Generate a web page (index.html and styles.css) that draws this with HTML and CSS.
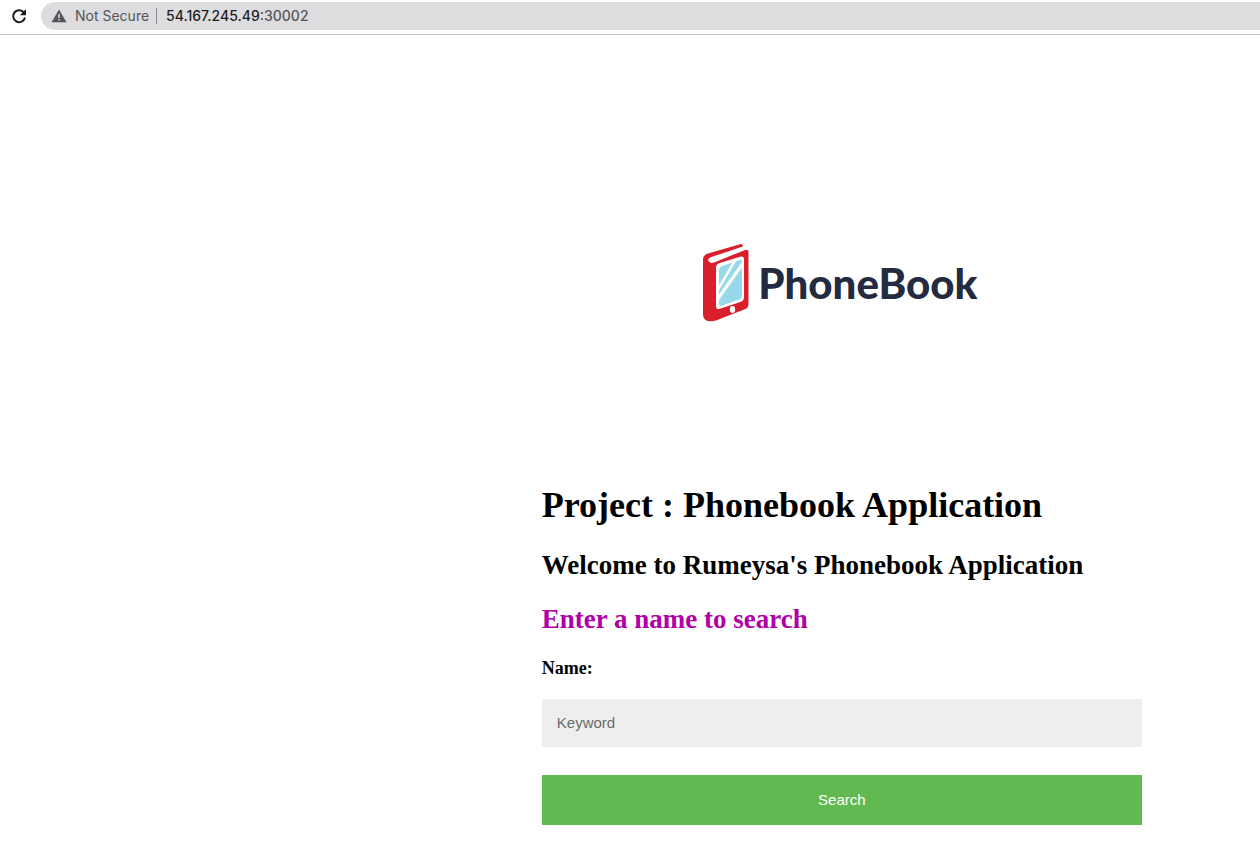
FILE: index.html
```html
<!DOCTYPE html>
<html lang="en">
<head>
<meta charset="utf-8">
<meta name="viewport" content="width=device-width, initial-scale=1">
<title>Phonebook Application</title>
<link rel="stylesheet" href="styles.css">
</head>
<body>
<header class="toolbar">
  <button class="reload" type="button" aria-label="Reload">
    <svg width="16" height="16" viewBox="0 0 16 16" fill="none" stroke="#1d1d1f" stroke-width="2">
      <path d="M13 4.600A6 6 0 1 0 14 9.500"/>
      <path d="M15 1v6.200H8.800z" fill="#1d1d1f" stroke="none"/>
    </svg>
  </button>
  <div class="address">
    <svg class="warning" width="16" height="14" viewBox="0 0 16 14">
      <path d="M8 0.500 15.500 13.300H0.500z" fill="#55565a"/>
      <path d="M7.300 5h1.500v4H7.300zM7.300 10h1.500v1.600H7.300z" fill="#dedfe1"/>
    </svg>
    <span class="security">Not Secure</span>
    <span class="url"><span class="host">54.167.245.49</span>:30002</span>
  </div>
</header>
<main class="content">
  <div class="logo">
    <svg class="book" width="48" height="80" viewBox="0 0 48 80">
      <path d="M1 17C1 13 3 11.500 6 10.400L38 1.200Q41 .5 41 3.500L9 15.500Q6 17 7.500 19Q9 20.500 12 19.500L43 7Q46.500 6 46.500 9V61Q46.500 64.500 43.500 66L14 77.500Q2 80.500 1 72z" fill="#d91f2b"/>
      <path d="M6.500 18Q5 15.500 10 13.800L41 3.400V6.200L12 18.800Q8 20 6.500 18z" fill="#fff"/>
      <path d="M14 24.500Q14 21.500 17 20.300L38 13.700Q42 12.700 42 16.500V54Q42 57.500 39 58.700L18 65.800Q14 67 14 63z" fill="#fff"/>
      <path d="M17 27Q17 24 20 23L37.500 17Q40 16.300 40 19V52.500Q40 55.500 37.500 56.500L20 62.500Q17 63.500 17 60.500z" fill="#98d9e9"/>
      <path d="M17 42.500 30.500 19 34.500 17.500 17 47zM17 51.500 40 19V24.500L17 57z" fill="#fff"/>
      <ellipse cx="30.500" cy="66.500" rx="2.700" ry="3.400" fill="#fff"/>
    </svg>
    <span class="brand">PhoneBook</span>
  </div>
  <h1>Project : Phonebook Application</h1>
  <h2>Welcome to Rumeysa's Phonebook Application</h2>
  <h2 class="prompt">Enter a name to search</h2>
  <form class="search">
    <label for="keyword">Name:</label>
    <input id="keyword" type="text" placeholder="Keyword">
    <button class="submit" type="button">Search</button>
  </form>
</main>
</body>
</html>
```
FILE: styles.css
```css
* {
  box-sizing: border-box;
}

body {
  margin: 0;
  background: #fff;
  color: #000;
  font-family: "Liberation Serif", serif;
}

.toolbar {
  display: flex;
  align-items: center;
  gap: 14px;
  padding: 2px 0 4px 11px;
  border-bottom: 1px solid #c4c4c4;
}

.reload {
  display: flex;
  padding: 0;
  border: 0;
  background: none;
}

.address {
  display: flex;
  flex: 1;
  align-items: center;
  height: 28px;
  padding-left: 10px;
  border-radius: 14px 0 0 14px;
  background: #dddddf;
  color: #55565a;
  font: 14px/16px Inter, sans-serif;
}

.security {
  margin-left: 8px;
  padding-right: 7px;
  border-right: 1px solid #88898c;
}

.url {
  margin-left: 9px;
  font-weight: 500;
}

.host {
  color: #1d1d1f;
}

.content {
  max-width: 600px;
  margin-left: 43%;
}

.logo {
  display: flex;
  align-items: center;
  justify-content: center;
  gap: 8px;
  padding: 208px 4px 162px 0;
}

.brand {
  color: #242b40;
  font: 900 42px/56px Lato, sans-serif;
}

h1 {
  margin: 0 0 25px;
  font-size: 36px;
  line-height: 40px;
}

h2 {
  margin: 0 0 24px;
  font-size: 27px;
  line-height: 30px;
}

.prompt {
  color: #b000a8;
}

.search {
  display: flex;
  flex-direction: column;
}

label {
  margin-bottom: 21px;
  font-size: 18px;
  font-weight: bold;
  line-height: 20px;
}

input {
  height: 48px;
  margin-bottom: 28px;
  padding: 0 15px 2px;
  border: 0;
  border-radius: 0;
  background: #eee;
  font: 15px "Liberation Sans", sans-serif;
}

input::placeholder {
  color: #6b6b6b;
}

.submit {
  height: 50px;
  padding: 0 0 2px;
  border: 0;
  background: #61ba51;
  color: #fff;
  font: 15px "Liberation Sans", sans-serif;
}
```
